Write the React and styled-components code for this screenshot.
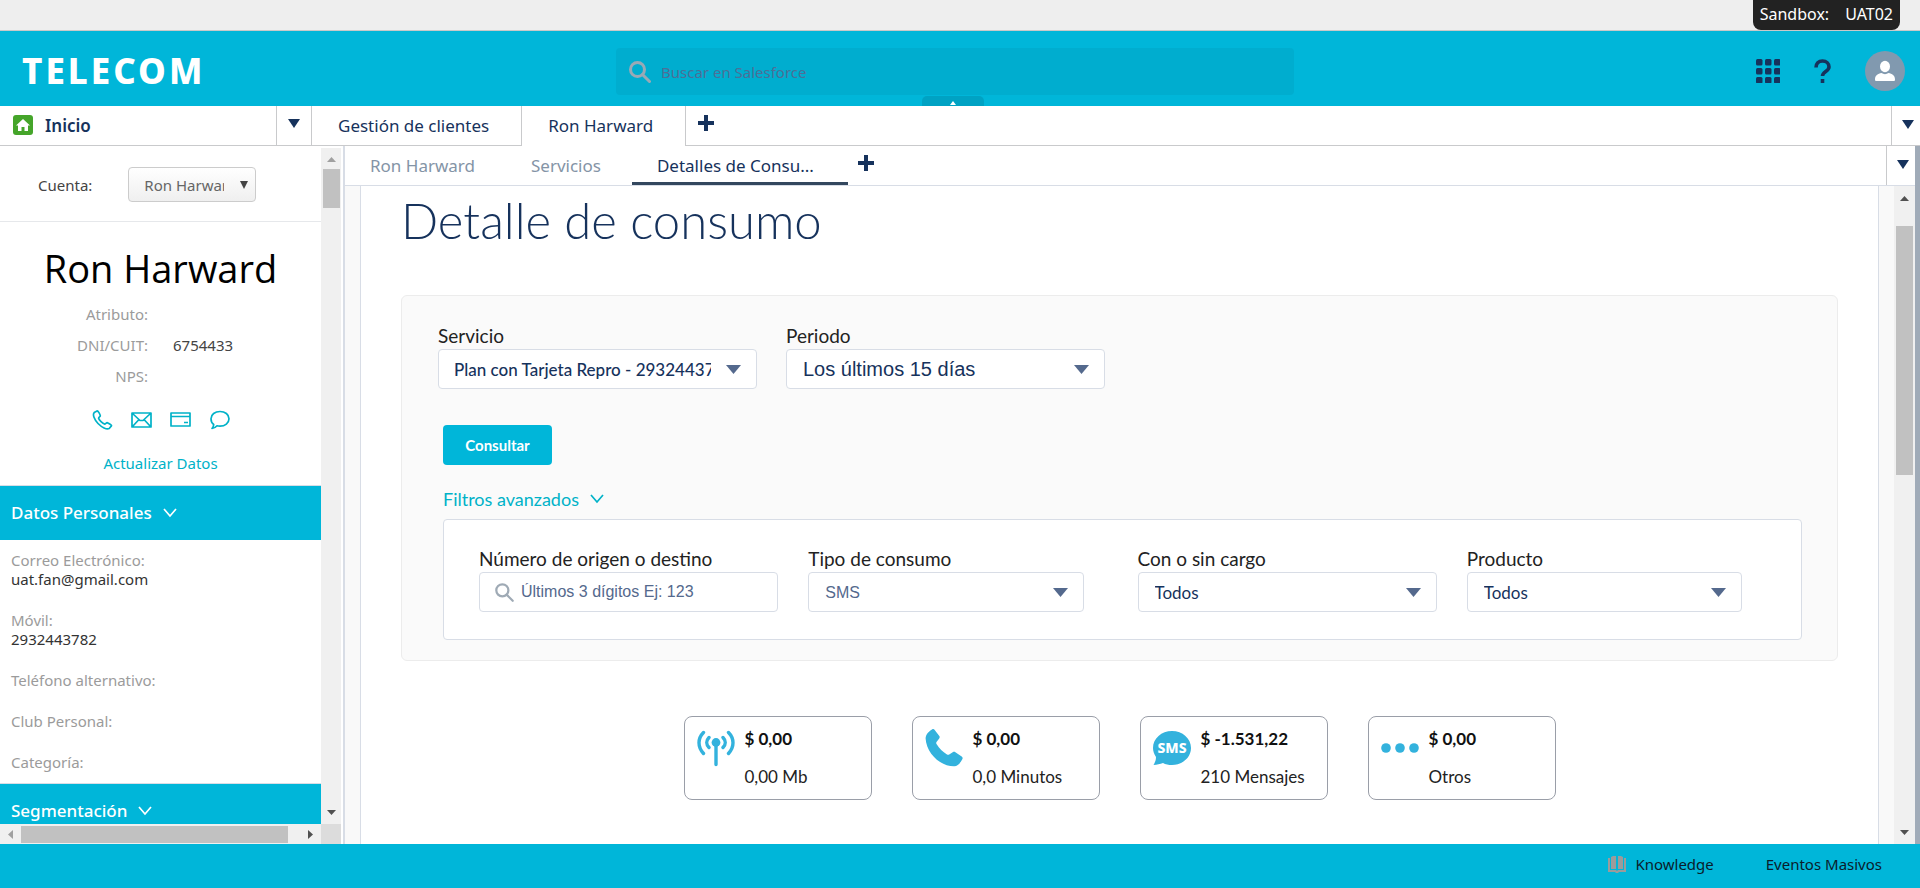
import React from "react";
import styled, { createGlobalStyle, css } from "styled-components";

const c = {
  cyan: "#00b6d9",
  navy: "#16325c",
  line: "#d8dde6",
  tabLine: "#c9cacc",
  teal: "#00b2c8",
  muted: "#9b9b9b",
  icon: "#33b2dd",
  slate: "#54698d",
};
const sans = `"Noto Sans", "Open Sans", sans-serif`;
const display = `Lato, "Open Sans", sans-serif`;
const plain = `"Liberation Sans", Arial, sans-serif`;

const Global = createGlobalStyle`
  *, *::before, *::after { box-sizing: border-box; }
  body { margin: 0; font-family: ${sans}; font-size: 15px; color: ${c.navy}; background: #fff; }
  button, input, select { font: inherit; color: inherit; margin: 0; }
  button { border: 0; padding: 0; background: none; cursor: pointer; }
  h1, h2, p, dl, dd, dt, ul { margin: 0; padding: 0; font-weight: inherit; }
  a { color: inherit; text-decoration: none; }
  svg { display: block; flex: none; }
`;

const Shell = styled.div`
  display: flex;
  flex-direction: column;
  height: 100vh;
  min-height: 600px;
  overflow: hidden;
`;

const TopStrip = styled.div`
  flex: none;
  display: flex;
  justify-content: flex-end;
  height: 31px;
  padding-right: 20px;
  background: #eee;
  border-bottom: 1px solid #c9c9c9;
`;
const Sandbox = styled.div`
  display: flex;
  gap: 16px;
  padding: 0 7px;
  height: 30px;
  line-height: 29px;
  border-radius: 0 0 8px 8px;
  background: #222;
  color: #fff;
  font-size: 16px;
`;

const Header = styled.header`
  flex: none;
  position: relative;
  display: grid;
  grid-template-columns: 1fr 678px 1fr;
  align-items: center;
  height: 75px;
  padding: 0 15px 0 5px;
  background: ${c.cyan};
`;
const Logo = styled.div`
  padding: 5px 0 0 17px;
  font-size: 35px;
  font-weight: 800;
  line-height: 40px;
  letter-spacing: 3px;
  color: #fff;
`;
const SearchBox = styled.label`
  display: flex;
  align-items: center;
  gap: 10px;
  height: 47px;
  margin-top: 6px;
  padding: 0 13px;
  border-radius: 4px;
  background: #00adcf;
`;
const SearchInput = styled.input`
  flex: 1;
  min-width: 0;
  border: 0;
  padding: 0;
  outline: 0;
  background: none;
  &::placeholder { color: #4d6f97; opacity: 1; }
`;
const HeaderTools = styled.div`
  display: flex;
  justify-content: flex-end;
  align-items: center;
  gap: 34px;
  padding-top: 5px;
`;
const Notch = styled.button`
  position: absolute;
  left: 50%;
  bottom: 0;
  display: flex;
  justify-content: center;
  align-items: flex-end;
  width: 62px;
  height: 10px;
  margin-left: -38px;
  border-radius: 5px 5px 0 0;
  background: #00a2c3;
`;

const TabBar = styled.nav`
  flex: none;
  display: flex;
  height: 40px;
  border-bottom: 1px solid ${(p) => (p.$sub ? c.line : c.tabLine)};
  font-size: 17px;
`;
const HomeTab = styled.button`
  display: flex;
  align-items: center;
  gap: 12px;
  width: 277px;
  padding: 0 13px 1px;
  border-right: 1px solid ${c.tabLine};
  font-weight: 600;
`;
const MenuButton = styled.button`
  display: flex;
  align-items: flex-start;
  justify-content: center;
  width: ${(p) => p.$w}px;
  padding-top: ${(p) => (p.$end ? 14 : 13)}px;
  padding-left: ${(p) => (p.$end ? 4 : 0)}px;
  border-left: ${(p) => (p.$end ? `1px solid ${c.tabLine}` : "0")};
  border-right: ${(p) => (p.$end ? "0" : `1px solid ${c.tabLine}`)};
`;
const Tab = styled.a`
  display: flex;
  align-items: center;
  height: 40px;
  padding: 0 32px 1px 26px;
  border-right: 1px solid ${c.tabLine};
  ${(p) => (p.$open ? css`background: #fff;` : css`height: 39px;`)}
`;
const SubTab = styled.a`
  display: flex;
  align-items: center;
  height: 39px;
  padding: 0 31px 0 25px;
  color: #8494a6;
  ${(p) => p.$open && css`
    padding: 3px 34px 0 25px;
    border-bottom: 3px solid #33475e;
    color: ${c.navy};
  `}
`;
const AddButton = styled.button`
  display: flex;
  padding: 9px 0 0 ${(p) => p.$left}px;
`;
const Spring = styled.div`flex: 1;`;

const Body = styled.div`
  flex: 1;
  min-height: 0;
  display: flex;
`;

const Side = styled.aside`
  flex: none;
  display: flex;
  flex-direction: column;
  width: 345px;
  padding-top: 2px;
  border-right: 2px solid ${c.line};
`;
const SideRow = styled.div`
  flex: 1;
  min-height: 0;
  display: flex;
`;
const SideContent = styled.div`
  width: 321px;
  overflow: hidden;
`;
const AccountRow = styled.div`
  display: flex;
  align-items: center;
  gap: 36px;
  height: 74px;
  padding-left: 38px;
  border-bottom: 1px solid #e6e8eb;
  color: #444;
`;
const AccountSelect = styled.select`
  appearance: none;
  width: 100%;
  height: 35px;
  padding: 0 31px 0 15px;
  border: 1px solid #ccc;
  border-radius: 4px;
  background: linear-gradient(#fff, #efefef);
  color: #666;
`;
const SelectWrap = styled.div`
  position: relative;
  width: ${(p) => (p.$w ? `${p.$w}px` : "auto")};
  margin-right: ${(p) => (p.$short ? 24 : 0)}px;
  > svg {
    position: absolute;
    right: ${(p) => p.$inset || 16}px;
    top: 50%;
    margin-top: -4px;
    pointer-events: none;
  }
`;
const Profile = styled.section`
  display: flex;
  flex-direction: column;
  align-items: center;
  height: 264px;
  padding-top: 19px;
  border-bottom: 1px solid ${c.line};
`;
const Name = styled.h2`
  font-family: "Open Sans", ${sans};
  font-size: 38px;
  line-height: 54px;
  color: #000;
`;
const Facts = styled.dl`
  align-self: stretch;
  display: grid;
  grid-template-columns: 148px 1fr;
  column-gap: 25px;
  padding-top: 4px;
  line-height: 31px;
  dt { text-align: right; color: ${c.muted}; }
  dd { color: #444; }
`;
const Contacts = styled.div`
  display: flex;
  gap: 18px;
  height: 20px;
  margin-top: 18px;
`;
const UpdateLink = styled.a`
  margin-top: 21px;
  line-height: 24px;
  color: ${c.teal};
`;
const SectionHead = styled.button`
  display: flex;
  align-items: center;
  gap: 11px;
  width: 100%;
  height: 54px;
  padding: 0 11px 1px;
  background: ${c.cyan};
  color: #fff;
  font-size: 17px;
  font-weight: 500;
`;
const Details = styled.dl`
  display: flex;
  flex-direction: column;
  gap: 22px;
  height: 244px;
  padding: 11px 11px 0;
  border-bottom: 1px solid ${c.line};
  line-height: 19px;
  dt { color: ${c.muted}; }
  dd { color: #333; }
`;

const Track = styled.div`
  flex: none;
  display: flex;
  flex-direction: ${(p) => (p.$h ? "row" : "column")};
  align-items: center;
  ${(p) => (p.$h ? "height: 20px;" : `width: ${p.$w}px;`)}
  padding: ${(p) => p.$pad};
  background: #f0f0f0;
`;
const Thumb = styled.div`
  flex: none;
  background: #c1c1c1;
  ${(p) => (p.$h ? "width: 267px; height: 17px; margin-left: 8px;" : `width: 17px; height: ${p.$len}px; margin-top: ${p.$gap}px;`)}
`;
const BottomScroll = styled.div`
  flex: none;
  display: flex;
  width: 341px;
  background: #dcdcdc;
  > div { width: 321px; }
`;

const Work = styled.main`
  flex: 1;
  min-width: 0;
  display: flex;
  flex-direction: column;
`;
const WorkRow = styled.div`
  flex: 1;
  min-height: 0;
  display: flex;
`;
const Gutter = styled.div`
  flex: 1;
  display: flex;
  overflow: hidden;
  padding: 0 15px;
  background: #f9f9f9;
`;
const Page = styled.div`
  flex: 1;
  padding: 0 40px;
  border: solid ${c.line};
  border-width: 0 1px;
  background: #fff;
`;
const Edge = styled.div`
  flex: none;
  width: 5px;
  background: #a0abb8;
`;
const Title = styled.h1`
  font-family: ${display};
  font-size: 49px;
  font-weight: 300;
  line-height: 68px;
`;
const Panel = styled.section`
  margin-top: 41px;
  padding: 28px 35px 20px 36px;
  border: 1px solid #ececec;
  border-radius: 6px;
  background: #fafafa;
  font-family: ${display};
  font-size: 18px;
`;
const Fields = styled.div`
  display: grid;
  grid-template-columns: ${(p) => (p.$four ? "repeat(4, minmax(0, 1fr))" : "319px 319px")};
  column-gap: ${(p) => (p.$four ? 30 : 29)}px;
`;
const FieldLabel = styled.label`
  display: block;
  height: 25px;
  line-height: 24px;
  font-size: 19px;
  color: #222;
`;
const boxLook = css`
  width: 100%;
  height: 40px;
  border: 1px solid ${c.line};
  border-radius: 4px;
  background: #fff;
`;
const FieldSelect = styled.select`
  ${boxLook}
  display: block;
  appearance: none;
  padding: 0 45px 0 ${(p) => (p.$strong ? 15 : 16)}px;
  font-family: ${(p) => (p.$plain ? plain : display)};
  font-size: ${(p) => p.$size || 17}px;
  font-weight: ${(p) => (p.$strong ? 500 : 400)};
  color: ${(p) => (p.$soft ? c.slate : c.navy)};
`;
const NumberBox = styled.div`
  ${boxLook}
  display: flex;
  align-items: center;
  gap: 7px;
  padding: 0 15px;
  font-family: ${plain};
  font-size: 16px;
  input::placeholder { color: ${c.slate}; }
`;
const Query = styled.button`
  display: block;
  width: 109px;
  height: 40px;
  margin: 36px 0 0 5px;
  border-radius: 4px;
  background: ${c.cyan};
  color: #fff;
  font-size: 15px;
  font-weight: 700;
`;
const Advanced = styled.button`
  display: flex;
  align-items: center;
  gap: 11px;
  height: 24px;
  margin: 22px 0 8px 5px;
  color: ${c.teal};
`;
const AdvancedBox = styled.div`
  height: 121px;
  margin-left: 5px;
  padding: 27px 35px 0;
  border: 1px solid ${c.line};
  border-radius: 4px;
  background: #fff;
`;
const Totals = styled.ul`
  display: flex;
  justify-content: center;
  gap: 40px;
  padding-top: 55px;
  list-style: none;
`;
const Total = styled.li`
  display: flex;
  gap: 10px;
  width: 188px;
  height: 84px;
  padding: 10px 0 0 12px;
  border: 1px solid #9a9ea8;
  border-radius: 8px;
  font-family: ${display};
  font-size: 17px;
  line-height: 24px;
  color: #222;
  p + p { margin-top: 14px; }
  strong { color: #111; font-weight: 700; }
`;

const Footer = styled.footer`
  flex: none;
  display: flex;
  justify-content: flex-end;
  gap: 52px;
  height: 44px;
  padding: 8px 38px 0 0;
  background: ${c.cyan};
  color: #0b1c2b;
  line-height: 24px;
  a { display: flex; align-items: center; gap: 9px; height: 24px; }
`;

const Down = ({ w = 12, h = 9, fill = c.navy }) => (
  <svg width={w} height={h} viewBox="0 0 12 9" preserveAspectRatio="none"><path d="M0 0h12L6 9z" fill={fill} /></svg>
);
const Arrow = ({ dir, fill = "#505050" }) => {
  const v = dir === "up" || dir === "down";
  const d = { up: "M0 5L4.500 0 9 5z", down: "M0 0h9L4.500 5z", left: "M5 0v9L0 4.500z", right: "M0 0v9l5-4.500z" }[dir];
  return <svg width={v ? 9 : 5} height={v ? 5 : 9}><path d={d} fill={fill} /></svg>;
};
const Chevron = ({ color = "#fff" }) => (
  <svg width="14" height="10" fill="none" stroke={color} strokeWidth="1.700"><path d="M1 1l6 7 6-7" /></svg>
);
const Plus = () => (
  <svg width="16" height="16" fill={c.navy}><path d="M6 0h4v6h6v4h-6v6H6v-6H0V6h6z" /></svg>
);
const Lens = ({ size = 22, color = "#9aa9b5", w = 3 }) => (
  <svg width={size} height={size} viewBox="0 0 22 22" fill="none" stroke={color} strokeWidth={w}>
    <circle cx="8.500" cy="8.500" r="7" /><path d="M13.500 13.500l7 7" strokeLinecap="round" />
  </svg>
);

const ContactIcon = ({ kind }) => (
  <svg width="21" height="20" viewBox="0 0 21 20" fill="none" stroke={c.teal} strokeWidth="1.700" strokeLinejoin="round">
    {kind === "phone" && <path d="M5 1L2.200 2.600C.4 4.600 2.200 9.600 6 13.500s8.600 6.300 11.200 5l2.200-2.600c.4-.7-.2-1.200-4-3.200-.8-.3-1.600 1-2.600 1.400C10.600 13.600 7 10 6.600 8.200c0-1 1.600-1.400 1.700-2.300C8.100 4.300 6 .5 5 1z" />}
    {kind === "mail" && <path d="M1 3h19v14H1zM1.500 3.500l7.500 7h3l7.500-7M1.500 16.500l6.500-7M19.500 16.500l-6.500-7" />}
    {kind === "card" && <path d="M1 3h19v13H1zM1 6.500h19M14 12.500h4" />}
    {kind === "chat" && <path d="M11 1.500c5 0 9 3 9 7.300s-4 7.400-9 7.400c-1 0-2 0-3-.4-1 1.200-3 2.500-5 2.700 1-1 1.700-2.500 1.700-4C2.800 13.200 2 11 2 8.800c0-4.300 4-7.300 9-7.300z" />}
  </svg>
);

const TotalIcon = ({ kind }) => (
  <svg width="38" height="40" viewBox="0 0 38 40" fill={c.icon}>
    {kind === "data" && (
      <g fill="none" stroke={c.icon} strokeWidth="3.400" strokeLinecap="round">
        <circle cx="19" cy="15.500" r="4.400" fill={c.icon} stroke="none" />
        <path d="M19 16v21.500M12 10.500c-3 3-3 7 0 10M26 10.500c3 3 3 7 0 10M6.500 5.500c-6 6-6 14.500 0 21M31.500 5.500c6 6 6 14.500 0 21" />
      </g>
    )}
    {kind === "phone" && <path d="M7 2.500c1-.7 2-.5 2.700.4l4.600 6c.6.900.5 1.700-.1 2.500L11.500 15c-.4.700-.4 1.300 0 2 3 4.600 6 7.600 10.500 10.500.8.5 1.500.4 2.200 0l3.500-2.300c.9-.6 1.800-.6 2.700 0l6.300 4.300c1 .7 1.200 1.800.6 2.800-1.800 3.600-4.600 6.800-8 7C15 39.500 1.500 26 .6 11.500c0-3.700 3-7 6.400-9z" />}
    {kind === "sms" && (
      <>
        <path d="M19 4c10.500 0 19 7.500 19 17s-8.500 17-19 17c-3.500 0-6.500-.6-9-2-3 1-6 1.700-9.500 2 1.500-2.500 2.500-5 2.500-8-2-3-3-6-3-9C0 11.500 8.500 4 19 4z" />
        <text x="19" y="26" textAnchor="middle" fontFamily="Noto Sans, sans-serif" fontWeight="800" fontSize="14" fill="#fff">SMS</text>
      </>
    )}
    {kind === "dots" && [5, 19, 33].map((x) => <circle key={x} cx={x} cy="21" r="4.800" />)}
  </svg>
);

const fields = [
  ["Correo Electrónico:", "uat.fan@gmail.com"],
  ["Móvil:", "2932443782"],
  ["Teléfono alternativo:"],
  ["Club Personal:"],
  ["Categoría:"],
];
const totals = [
  ["data", "$ 0,00", "0,00 Mb"],
  ["phone", "$ 0,00", "0,0 Minutos"],
  ["sms", "$ -1.531,22", "210 Mensajes"],
  ["dots", "$ 0,00", "Otros"],
];

const Field = ({ id, label, value, short, ...rest }) => (
  <div>
    <FieldLabel htmlFor={id}>{label}</FieldLabel>
    <SelectWrap $short={short}>
      <FieldSelect id={id} {...rest}><option>{value}</option></FieldSelect>
      <Down w={15} h={9} fill={c.slate} />
    </SelectWrap>
  </div>
);

export default function App() {
  return (
    <Shell>
      <Global />
      <TopStrip><Sandbox><span>Sandbox:</span><span>UAT02</span></Sandbox></TopStrip>
      <Header>
        <Logo>TELECOM</Logo>
        <SearchBox>
          <Lens />
          <SearchInput type="search" aria-label="Buscar" placeholder="Buscar en Salesforce" />
        </SearchBox>
        <HeaderTools>
          <button aria-label="Aplicaciones">
            <svg width="24" height="24" fill={c.navy}>
              {[0, 9, 18].map((y) => [0, 9, 18].map((x) => <rect key={`${x}-${y}`} x={x} y={y} width="6.500" height="6.500" rx="1.500" />))}
            </svg>
          </button>
          <button aria-label="Ayuda">
            <svg width="17" height="24" fill="none" stroke={c.navy} strokeWidth="3.600">
              <path d="M2 8.500C2 4.500 4.500 2 8.500 2S15 4.500 15 8c0 4.500-6.500 4.500-6.500 9" /><path d="M8.500 20v4" />
            </svg>
          </button>
          <button aria-label="Perfil">
            <svg width="40" height="40" fill="#fff">
              <circle cx="20" cy="20" r="20" fill="#8199af" /><ellipse cx="20" cy="15.500" rx="5" ry="5.700" />
              <path d="M10 28.500c0-4 3-6 6.500-6.500 2 1.500 5 1.500 7 0 3.500.5 6.500 2.500 6.500 6.500 0 1-.5 1.500-1.500 1.500h-17c-1 0-1.500-.5-1.500-1.500z" />
            </svg>
          </button>
        </HeaderTools>
        <Notch aria-label="Contraer"><svg width="6" height="5"><path d="M0 4l3-4 3 4z" fill="#fff" /></svg></Notch>
      </Header>

      <TabBar>
        <HomeTab>
          <svg width="20" height="20"><rect width="20" height="20" rx="3" fill="#45a52a" /><path d="M10 4l7 6.500h-2V16h-3.500v-4h-3v4H5v-5.500H3z" fill="#fff" /></svg>
          Inicio
        </HomeTab>
        <MenuButton $w={35} aria-label="Menú"><Down /></MenuButton>
        <Tab href="#clientes">Gestión de clientes</Tab>
        <Tab href="#ron" $open>Ron Harward</Tab>
        <AddButton $left={12} aria-label="Nueva pestaña"><Plus /></AddButton>
        <Spring />
        <MenuButton $w={29} $end aria-label="Más pestañas"><Down /></MenuButton>
      </TabBar>

      <Body>
        <Side>
          <SideRow>
            <SideContent>
              <AccountRow>
                <label htmlFor="cuenta">Cuenta:</label>
                <SelectWrap $w={128} $inset={8}>
                  <AccountSelect id="cuenta"><option>Ron Harward</option></AccountSelect>
                  <Down w={8} h={8} fill="#444" />
                </SelectWrap>
              </AccountRow>
              <Profile>
                <Name>Ron Harward</Name>
                <Facts>
                  <dt>Atributo:</dt><dd />
                  <dt>DNI/CUIT:</dt><dd>6754433</dd>
                  <dt>NPS:</dt><dd />
                </Facts>
                <Contacts>
                  {["phone", "mail", "card", "chat"].map((k) => <button key={k} aria-label={k}><ContactIcon kind={k} /></button>)}
                </Contacts>
                <UpdateLink href="#datos">Actualizar Datos</UpdateLink>
              </Profile>
              <SectionHead>Datos Personales <Chevron /></SectionHead>
              <Details>
                {fields.map(([k, v]) => <div key={k}><dt>{k}</dt>{v && <dd>{v}</dd>}</div>)}
              </Details>
              <SectionHead>Segmentación <Chevron /></SectionHead>
            </SideContent>
            <Track $w={20} $pad="9px 0 9px">
              <Arrow dir="up" fill="#a0a0a0" />
              <Thumb $len={39} $gap={7} />
              <Spring />
              <Arrow dir="down" />
            </Track>
          </SideRow>
          <BottomScroll>
            <Track $h $pad="0 8px">
              <Arrow dir="left" fill="#a0a0a0" />
              <Thumb $h />
              <Spring />
              <Arrow dir="right" />
            </Track>
          </BottomScroll>
        </Side>

        <Work>
          <TabBar $sub>
            <SubTab href="#ron-detalle">Ron Harward</SubTab>
            <SubTab href="#servicios">Servicios</SubTab>
            <SubTab href="#consumo" $open>Detalles de Consu...</SubTab>
            <AddButton $left={10} aria-label="Nueva subpestaña"><Plus /></AddButton>
            <Spring />
            <MenuButton $w={29} $end aria-label="Más subpestañas"><Down /></MenuButton>
          </TabBar>
          <WorkRow>
            <Gutter>
              <Page>
                <Title>Detalle de consumo</Title>
                <Panel>
                  <Fields>
                    <Field id="servicio" label="Servicio" value="Plan con Tarjeta Repro - 2932443782" $strong />
                    <Field id="periodo" label="Periodo" value="Los últimos 15 días" $plain $size={20} />
                  </Fields>
                  <Query>Consultar</Query>
                  <Advanced>Filtros avanzados <Chevron color={c.teal} /></Advanced>
                  <AdvancedBox>
                    <Fields $four>
                      <div>
                        <FieldLabel htmlFor="numero">Número de origen o destino</FieldLabel>
                        <NumberBox>
                          <Lens size={19} w={2.6} color="#9faab5" />
                          <SearchInput id="numero" placeholder="Últimos 3 dígitos Ej: 123" />
                        </NumberBox>
                      </div>
                      <Field id="tipo" label="Tipo de consumo" value="SMS" short $plain $soft $size={16} />
                      <Field id="cargo" label="Con o sin cargo" value="Todos" />
                      <Field id="producto" label="Producto" value="Todos" short />
                    </Fields>
                  </AdvancedBox>
                </Panel>
                <Totals>
                  {totals.map(([kind, amount, unit]) => (
                    <Total key={kind}>
                      <TotalIcon kind={kind} />
                      <div><p><strong>{amount}</strong></p><p>{unit}</p></div>
                    </Total>
                  ))}
                </Totals>
              </Page>
            </Gutter>
            <Track $w={21} $pad="10px 0 9px">
              <Arrow dir="up" />
              <Thumb $len={249} $gap={25} />
              <Spring />
              <Arrow dir="down" />
            </Track>
          </WorkRow>
        </Work>
        <Edge />
      </Body>

      <Footer>
        <a href="#knowledge">
          <svg width="18" height="17" fill="#9b9b9b"><path d="M3 1l2-1h3v13H3zM10 0h3l2 1v12h-5zM0 2h2v12h6l1 1 1-1h6V2h2v14h-7l-1 1H8l-1-1H0z" /></svg>
          Knowledge
        </a>
        <a href="#eventos">Eventos Masivos</a>
      </Footer>
    </Shell>
  );
}
